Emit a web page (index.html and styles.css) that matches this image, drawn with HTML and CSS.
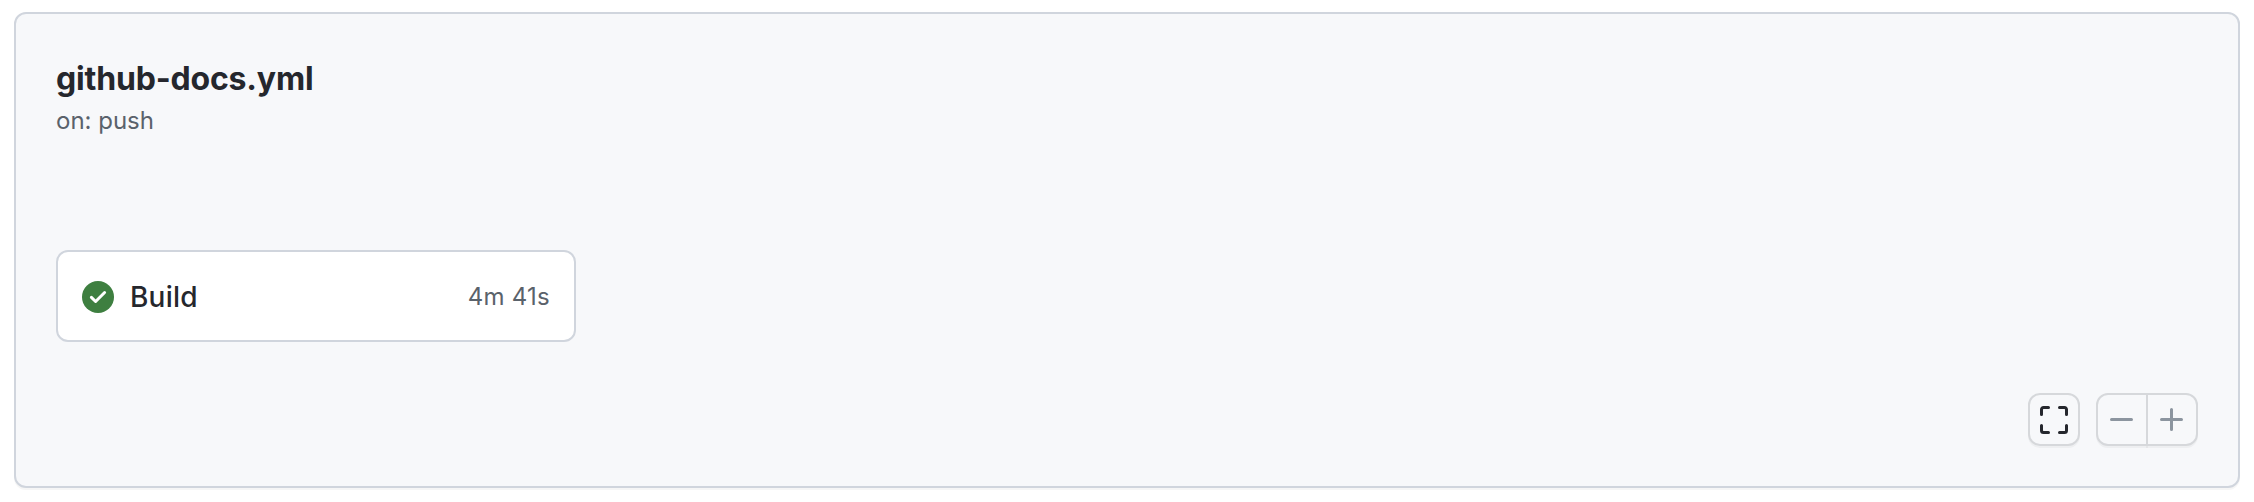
FILE: index.html
```html
<!DOCTYPE html>
<html lang="en">
<head>
<meta charset="utf-8">
<title>github-docs.yml</title>
<link rel="stylesheet" href="styles.css">
</head>
<body>
<main class="workflow">
  <header class="heading">
    <h1 class="title">github-docs.yml</h1>
    <p class="trigger">on: push</p>
  </header>
  <section class="job">
    <svg class="icon" viewBox="0 0 16 16"><circle cx="8" cy="8" r="8" fill="#3e7f40"/><path d="M4.7 8.2 6.8 10.25 11.3 5.75" fill="none" stroke="#fff" stroke-width="1.5" stroke-linecap="round" stroke-linejoin="round"/></svg>
    <span class="job-name">Build</span>
    <span class="job-time">4m 41s</span>
  </section>
  <footer class="controls">
    <button class="button" aria-label="Full screen"><svg class="icon" viewBox="0 0 16 16"><path d="M2.75 2.5a.25.25 0 00-.25.25v2.5a.75.75 0 01-1.5 0v-2.5C1 1.784 1.784 1 2.75 1h2.5a.75.75 0 010 1.5h-2.5zM10 1.75a.75.75 0 01.75-.75h2.5c.966 0 1.75.784 1.75 1.75v2.5a.75.75 0 01-1.5 0v-2.5a.25.25 0 00-.25-.25h-2.5a.75.75 0 01-.75-.75zM1.75 10a.75.75 0 01.75.75v2.5c0 .138.112.25.25.25h2.5a.75.75 0 010 1.5h-2.5A1.75 1.75 0 011 13.25v-2.5a.75.75 0 01.75-.75zm12.5 0a.75.75 0 01.75.75v2.5A1.75 1.75 0 0113.25 15h-2.5a.75.75 0 010-1.5h2.5a.25.25 0 00.25-.25v-2.5a.75.75 0 01.75-.75z"/></svg></button>
    <div class="zoom">
      <button class="button muted" aria-label="Zoom out"><svg class="icon" viewBox="0 0 16 16"><path d="M2 7.75A.75.75 0 012.75 7h10a.75.75 0 010 1.5h-10A.75.75 0 012 7.75z"/></svg></button>
      <button class="button muted" aria-label="Zoom in"><svg class="icon" viewBox="0 0 16 16"><path d="M7.75 2a.75.75 0 01.75.75V7h4.25a.75.75 0 010 1.5H8.5v4.25a.75.75 0 01-1.5 0V8.5H2.75a.75.75 0 010-1.5H7V2.75A.75.75 0 017.75 2z"/></svg></button>
    </div>
  </footer>
</main>
</body>
</html>
```
FILE: styles.css
```css
* {
  box-sizing: border-box;
}

body {
  margin: 0;
  height: 502px;
  padding: 12px 14px;
  background: #fff;
  color: #25272d;
  font-family: Inter, "Liberation Sans", sans-serif;
}

.workflow {
  display: flex;
  flex-direction: column;
  height: 476px;
  padding: 41px 40px 40px;
  border: 2px solid #d0d5dd;
  border-radius: 12px;
  background: #f7f8fa;
  box-shadow: 0 2px 0 rgba(27, 31, 36, 0.04);
}

.heading {
  height: 195px;
}

.title {
  margin: 0;
  font-size: 32px;
  font-weight: 700;
  line-height: 48px;
  letter-spacing: -0.17px;
}

.trigger {
  margin: 0;
  color: #5a626b;
  font-size: 24px;
  line-height: 36px;
}

.job {
  display: flex;
  align-items: center;
  width: 520px;
  height: 92px;
  padding: 2px 24px 0;
  border: 2px solid #d0d5dd;
  border-radius: 12px;
  background: #fff;
}

.icon {
  display: block;
  flex: none;
  width: 32px;
  height: 32px;
  fill: currentColor;
}

.job-name {
  margin-left: 16px;
  font-size: 28px;
  font-weight: 500;
  letter-spacing: 0.2px;
}

.job-time {
  margin-left: auto;
  padding-bottom: 2px;
  color: #5a626b;
  font-size: 24px;
  letter-spacing: 0.25px;
}

.controls {
  display: flex;
  justify-content: flex-end;
  gap: 16px;
  margin-top: auto;
}

.button {
  display: flex;
  align-items: center;
  justify-content: center;
  width: 52px;
  height: 53px;
  margin: 0;
  padding: 1px 0 0;
  border: 2px solid #d6d8db;
  border-radius: 12px;
  background: #f7f8fa;
  color: #25272d;
  box-shadow: 0 2px 0 rgba(27, 31, 36, 0.04);
}

.zoom {
  display: flex;
}

.zoom .button:first-child {
  border-radius: 12px 0 0 12px;
}

.zoom .button:last-child {
  margin-left: -2px;
  border-radius: 0 12px 12px 0;
}

.muted {
  color: #8c959f;
}
```
